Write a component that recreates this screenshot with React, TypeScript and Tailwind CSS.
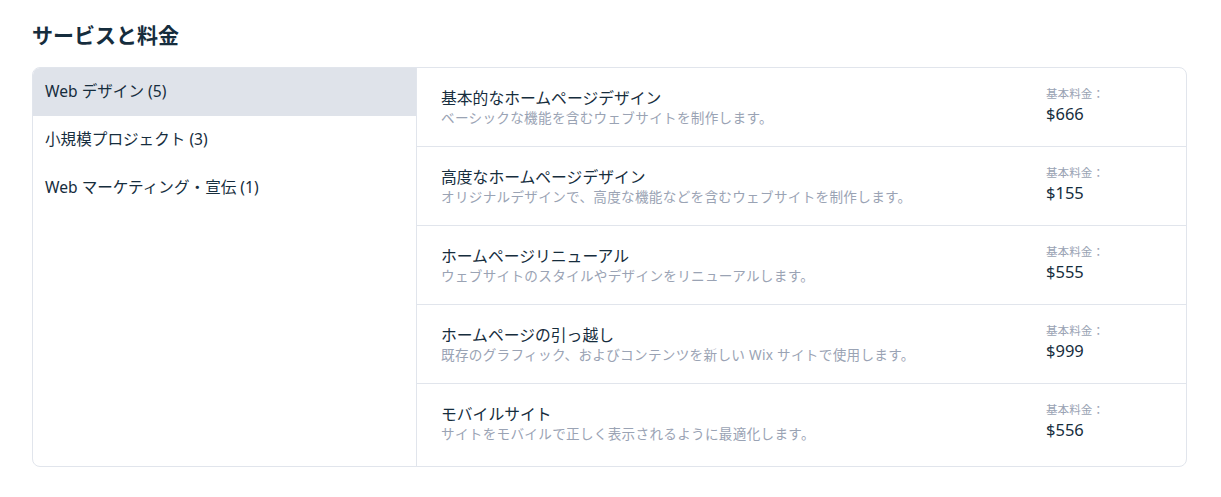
const categories = [
  { name: "Web デザイン (5)", active: true },
  { name: "小規模プロジェクト (3)", active: false },
  { name: "Web マーケティング・宣伝 (1)", active: false },
];

const services = [
  { title: "基本的なホームページデザイン", desc: "ベーシックな機能を含むウェブサイトを制作します。", price: "$666" },
  { title: "高度なホームページデザイン", desc: "オリジナルデザインで、高度な機能などを含むウェブサイトを制作します。", price: "$155" },
  { title: "ホームページリニューアル", desc: "ウェブサイトのスタイルやデザインをリニューアルします。", price: "$555" },
  { title: "ホームページの引っ越し", desc: "既存のグラフィック、およびコンテンツを新しい Wix サイトで使用します。", price: "$999" },
  { title: "モバイルサイト", desc: "サイトをモバイルで正しく表示されるように最適化します。", price: "$556" },
];

export default function App() {
  return (
    <div
      className="min-h-[497px] w-[1221px] bg-white px-8 pt-[21px] text-[#20303c]"
      style={{ fontFamily: '"Noto Sans", "Noto Sans CJK JP", sans-serif' }}
    >
      <h2 className="text-[21px] font-bold leading-7 text-[#162d3d]">サービスと料金</h2>

      <div className="mt-[18px] flex h-[400px] w-[1155px] overflow-hidden rounded-lg border border-[#e1e5ec]">
        <ul className="w-[384px] shrink-0 border-r border-[#e1e5ec]">
          {categories.map((c) => (
            <li
              key={c.name}
              className={`flex h-12 items-center px-3 text-[15.6px] text-[#162d3d] ${
                c.active ? "bg-[#dfe3ea]" : ""
              }`}
            >
              {c.name}
            </li>
          ))}
        </ul>

        <div className="flex-1">
          {services.map((s, i) => (
            <div
              key={s.title}
              className={`flex h-[79px] pl-6 pr-6 ${
                i < services.length - 1 ? "border-b border-[#e1e5ec]" : ""
              }`}
            >
              <div className="flex-1 pt-5">
                <p className="text-[15.8px] leading-5 text-[#162d3d]">{s.title}</p>
                <p className="mt-[2px] text-[13.6px] leading-4 tracking-[0.3px] text-[#9aa3b4]">{s.desc}</p>
              </div>
              <div className="w-[116px] pt-[18px]">
                <p className="text-[11.6px] leading-4 text-[#9aa3b4]">基本料金：</p>
                <p className="mt-[2px] text-[16.5px] leading-5 text-[#162d3d]">{s.price}</p>
              </div>
            </div>
          ))}
        </div>
      </div>
    </div>
  );
}
